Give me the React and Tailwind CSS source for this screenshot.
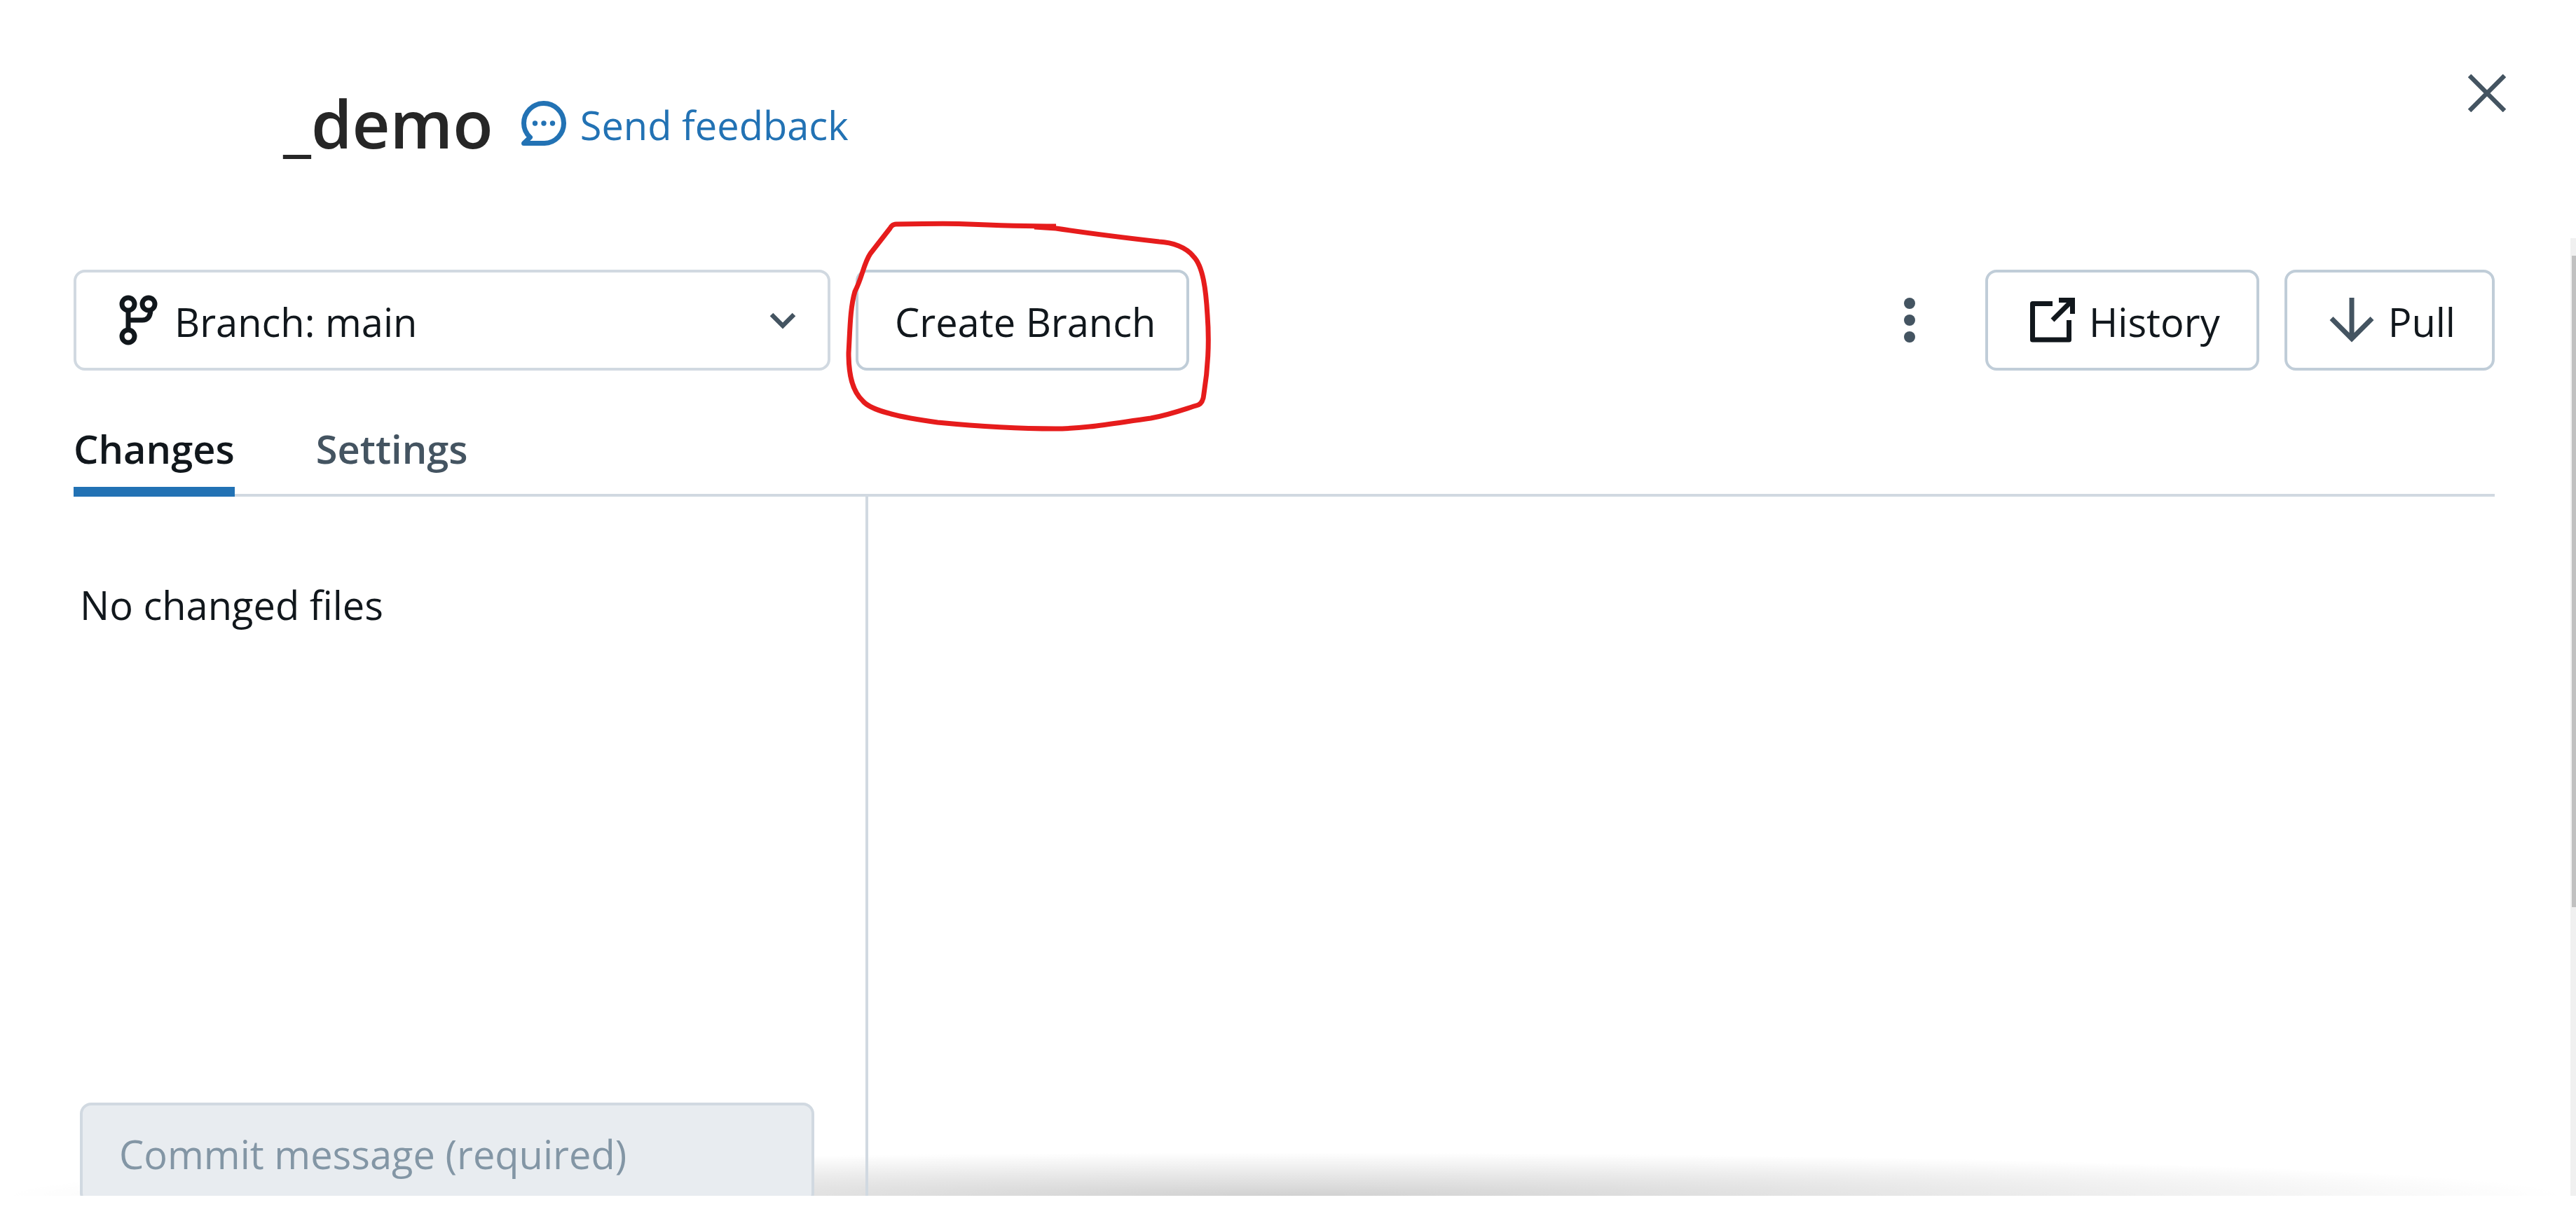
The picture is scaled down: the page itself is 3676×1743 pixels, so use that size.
import React from "react";

function BranchIcon() {
  return (
    <svg aria-hidden="true" className="h-[74px] w-14 shrink-0" viewBox="0 0 56 74" fill="none" stroke="#11171c" strokeWidth="7">
      <circle cx="14" cy="14" r="9" />
      <circle cx="43" cy="14" r="9" />
      <circle cx="14" cy="60" r="9" />
      <path d="M14 23v28M14 37h20q11 0 12-14" />
    </svg>
  );
}

function FeedbackIcon() {
  return (
    <svg aria-hidden="true" className="h-16 w-16" viewBox="0 0 64 64" fill="none">
      <path d="M33 60.500H3.500L12.500 52C6.500 46.500 3.500 40 3.500 32A28.500 28.500 0 1 1 33 60.500z" stroke="#2272b4" strokeWidth="7" strokeLinejoin="round" />
      <g fill="#2272b4">
        <circle cx="19.500" cy="32" r="3.700" />
        <circle cx="32" cy="32" r="3.700" />
        <circle cx="44.500" cy="32" r="3.700" />
      </g>
    </svg>
  );
}

const secondary =
  "flex h-36 items-center rounded-2xl border-4 border-[#c0cdd8] bg-white text-[56px] leading-[76px] text-[#11171c]";

export default function App() {
  return (
    <div className="flex h-screen flex-col overflow-hidden bg-white pb-9 font-['Open_Sans',sans-serif] text-[56px] leading-[76px] text-[#11171c]">
      <header className="flex h-[340px] shrink-0 items-start justify-between pr-[100px] pl-[404px]">
        <div className="flex items-center gap-10 pt-[110px]">
          <h1 className="text-[94px] leading-[132px] font-semibold text-[#262626]">_demo</h1>
          <a href="#feedback" className="flex items-center gap-5 text-[#2272b4]">
            <FeedbackIcon />
            <span className="pt-1">Send feedback</span>
          </a>
        </div>
        <button type="button" aria-label="Close" className="mt-[106px]">
          <svg aria-hidden="true" className="h-[54px] w-[54px]" viewBox="0 0 54 54" stroke="#445461" strokeWidth="6.500">
            <path d="M2 2l50 50M52 2L2 52" />
          </svg>
        </button>
      </header>
      <div className="flex min-h-0 flex-1">
        <main className="flex min-w-0 flex-1 flex-col bg-[radial-gradient(farthest-side_at_50%_100%,rgba(0,0,0,0.18),transparent)] bg-[length:100%_62px] bg-bottom bg-no-repeat pt-[45px]">
          <div className="flex shrink-0 items-center pr-[108px] pl-[105px]">
            <button type="button" className="flex h-36 w-[1080px] items-center rounded-2xl border-4 border-[#d1d9e1] bg-white pr-11 pl-15 text-left">
              <BranchIcon />
              <span className="ml-6 flex-1 pt-1">Branch: main</span>
              <svg aria-hidden="true" className="h-9 w-10" viewBox="0 0 40 36" fill="none" stroke="#445461" strokeWidth="6.500">
                <path d="M4 10l16 16L36 10" />
              </svg>
            </button>
            <div className="relative ml-9">
              <button type="button" className={secondary + " pr-11 pl-13"}>
                <span className="pt-1">Create Branch</span>
              </button>
              <svg aria-hidden="true" className="pointer-events-none absolute -top-[85px] -left-[181px] h-[340px] w-[740px]" viewBox="0 0 740 340" fill="none" stroke="#e61c1c" strokeWidth="7" strokeLinejoin="round">
                <path d="M467 23C420 23 390 22 328 19.500C300 19 270 19.500 239 20Q233 20 230 26L202 62C192 77 191 95 180 116C173 140 173 170 171 204C171 235 176 258 191 272C202 286 240 295 298 303C350 308 410 312 466 312C510 312 550 304 602 297C630 292 650 284 670 278Q677 275 678 262C684 225 686 190 683 150C681 115 677 80 663 66C653 53 633 46 614 45C570 40 520 34 467 26L436 24" />
              </svg>
            </div>
            <div className="ml-auto flex items-center gap-9">
              <button type="button" aria-label="More actions" className="mr-16">
                <svg aria-hidden="true" className="h-16 w-4" viewBox="0 0 16 64" fill="#445461">
                  <circle cx="8" cy="8" r="8" />
                  <circle cx="8" cy="32" r="8" />
                  <circle cx="8" cy="56" r="8" />
                </svg>
              </button>
              <button type="button" className={secondary + " gap-5 pr-13 pl-15"}>
                <svg aria-hidden="true" className="h-16 w-16" viewBox="0 0 64 64" fill="none" stroke="#11171c" strokeWidth="7">
                  <path d="M32 8.500H3.500V60H55.500V32" strokeLinejoin="round" />
                  <path d="M41 3.500h19.500v19.500M60 4L32 32" />
                </svg>
                <span className="pt-1">History</span>
              </button>
              <button type="button" className={secondary + " gap-5 pr-13 pl-15"}>
                <svg aria-hidden="true" className="h-16 w-16" viewBox="0 0 64 64" fill="none" stroke="#445461" strokeWidth="7">
                  <path d="M32 0v58M3 29.500l29 29 29-29" />
                </svg>
                <span className="pt-1">Pull</span>
              </button>
            </div>
          </div>
          <div role="tablist" className="mt-[72px] mr-[108px] ml-[105px] flex h-[108px] shrink-0 gap-[116px] border-b-4 border-[#d1d9e1] font-semibold">
            <button type="button" role="tab" aria-selected="true" className="h-[108px] border-b-[14px] border-[#2272b4] pb-4">Changes</button>
            <button type="button" role="tab" aria-selected="false" className="h-[104px] pb-[26px] text-[#445461]">Settings</button>
          </div>
          <div className="flex min-h-0 flex-1 overflow-hidden pl-[105px]">
            <section className="flex w-[1134px] flex-col justify-between border-r-4 border-[#d1d9e1] pt-[116px] pr-[73px] pl-[9px]">
              <p>No changed files</p>
              <input type="text" disabled aria-label="Commit message" placeholder="Commit message (required)" className="-mb-3 h-[145px] w-full shrink-0 rounded-2xl border-4 border-[#d1d9e1] bg-[#e8ecf0] px-13 placeholder:text-[#8396a5] placeholder:opacity-100" />
            </section>
          </div>
        </main>
        <div aria-hidden="true" className="w-2 bg-[#f0f0f0] pt-[25px] pl-0.5">
          <div className="h-[930px] bg-[#c1c1c1]" />
        </div>
      </div>
    </div>
  );
}
